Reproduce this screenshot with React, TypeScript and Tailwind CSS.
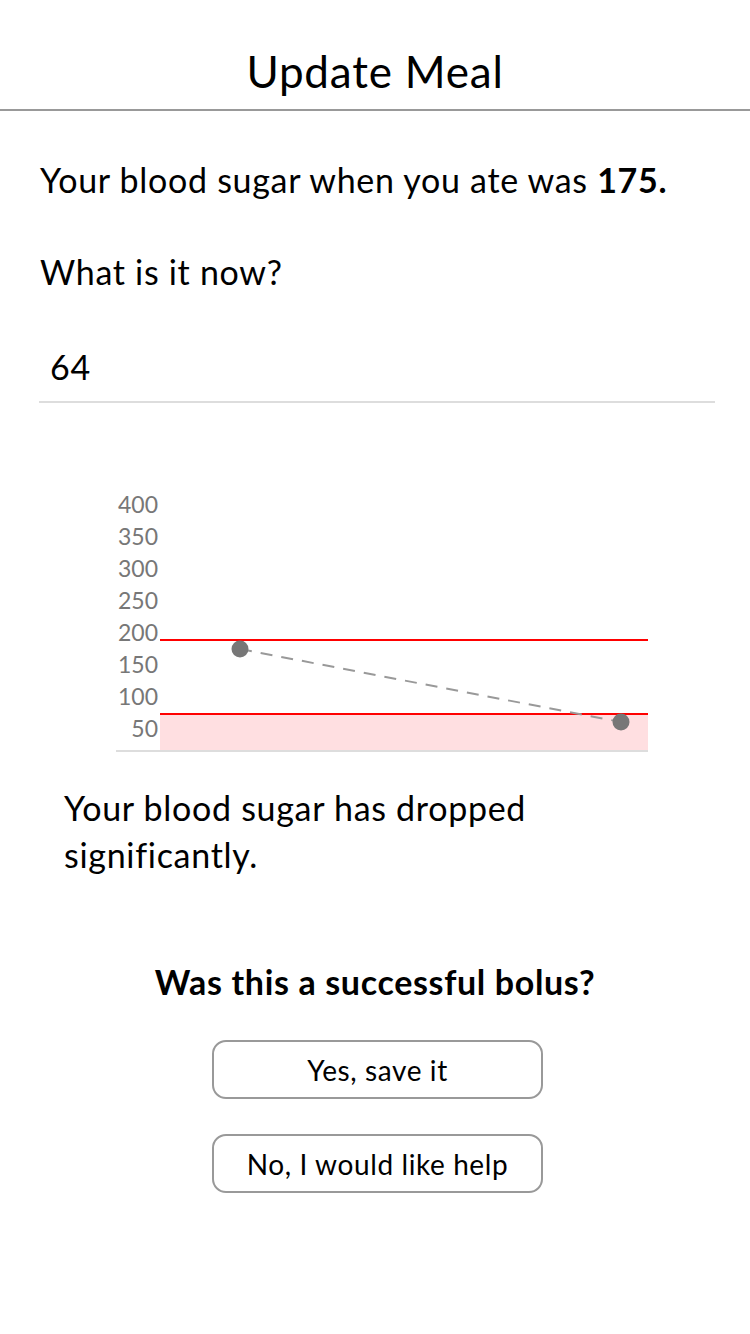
const FONT = "font-['Lato','Noto_Sans',sans-serif]";

const labels = [400, 350, 300, 250, 200, 150, 100, 50];

function SugarChart() {
  return (
    <svg width="560" height="290" viewBox="100 480 560 290" className="block">
      {labels.map((v, i) => (
        <text
          key={v}
          x="158"
          y={505 + i * 32 + 8}
          textAnchor="end"
          fontSize="23"
          fill="#777777"
          fontFamily="Lato, 'Noto Sans', sans-serif"
        >
          {v}
        </text>
      ))}
      {/* low range */}
      <rect x="160" y="714" width="488" height="36" fill="#ffdfe1" />
      <line x1="160" y1="640" x2="648" y2="640" stroke="#ff0000" strokeWidth="2" />
      <line x1="160" y1="714" x2="648" y2="714" stroke="#ff0000" strokeWidth="2" />
      <line x1="116" y1="751" x2="648" y2="751" stroke="#dddddd" strokeWidth="2" />
      <line
        x1="240"
        y1="649"
        x2="621"
        y2="722"
        stroke="#999999"
        strokeWidth="2"
        strokeDasharray="12 9"
      />
      <circle cx="240" cy="649" r="8.5" fill="#777777" />
      <circle cx="621" cy="722" r="8.5" fill="#777777" />
    </svg>
  );
}

export default function App() {
  return (
    <div className={`min-h-[1334px] w-[750px] bg-white text-black ${FONT}`}>
      <header className="flex h-[111px] items-center justify-center border-b-2 border-[#999999] pt-[32px]">
        <h1 className="text-[44px] leading-none tracking-[0.8px]">Update Meal</h1>
      </header>

      <div className="px-[40px] pt-[49px] tracking-[0.7px]">
        <p className="text-[34px] leading-[40px]">
          Your blood sugar when you ate was <span className="font-bold">175.</span>
        </p>
        <p className="mt-[52px] text-[34px] leading-[40px]">What is it now?</p>
      </div>

      <div className="ml-[39px] mr-[35px] mt-[55px] border-b-2 border-[#dddddd] px-[11px] pb-[14px]">
        <input
          defaultValue="64"
          className="w-full bg-transparent text-[34px] leading-[40px] tracking-[0.7px] outline-none"
        />
      </div>

      <div className="ml-[100px] mt-[77px]">
        <SugarChart />
      </div>

      <p className="ml-[64px] mt-[14px] w-[520px] text-[34px] leading-[47px] tracking-[0.7px]">
        Your blood sugar has dropped significantly.
      </p>

      <div className="mt-[84px] flex flex-col items-center">
        <p className="text-[34px] font-bold leading-[40px] tracking-[0.65px]">
          Was this a successful bolus?
        </p>
        <button className="ml-[5px] mt-[38px] flex h-[59px] w-[331px] items-center justify-center rounded-[14px] border-2 border-[#999999] text-[28px] tracking-[0.6px]">
          Yes, save it
        </button>
        <button className="ml-[5px] mt-[35px] flex h-[59px] w-[331px] items-center justify-center rounded-[14px] border-2 border-[#999999] text-[28px] tracking-[0.6px]">
          No, I would like help
        </button>
      </div>
    </div>
  );
}
